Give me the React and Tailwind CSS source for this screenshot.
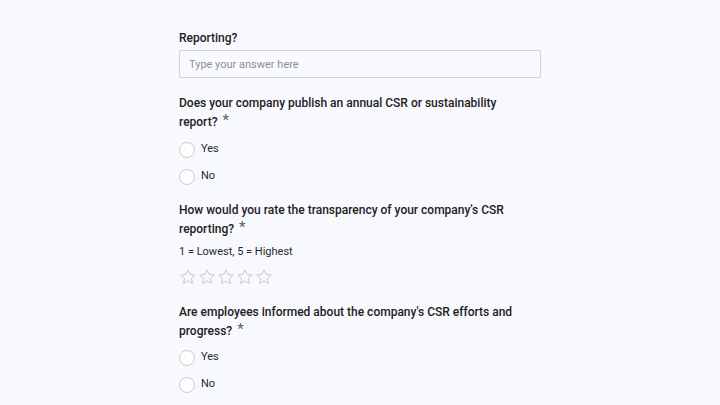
const Star = () => (
  <svg width="18" height="18" viewBox="0 0 24 24" fill="none" stroke="#c4c6ca" strokeWidth="1.3" strokeLinejoin="round">
    <path d="M12 2.5l2.9 6.1 6.6.8-4.9 4.6 1.3 6.6L12 17.3l-5.9 3.3 1.3-6.6-4.9-4.6 6.6-.8z" />
  </svg>
)

const Question = ({ children, required, className = '' }) => (
  <p className={`max-w-[340px] text-[12px] leading-[19px] font-medium text-[#1d2025] ${className}`}>
    {children}
    {required && (
      <span className="inline-block ml-[5px] h-[13px] text-[15px] leading-[15px] text-[#5b5f66] font-normal align-top">*</span>
    )}
  </p>
)

const Radio = ({ label }) => (
  <label className="flex items-center h-[27px] gap-[6px] text-[11px] text-[#26292e]">
    <span className="w-4 h-4 rounded-full border border-[#c9cbd0] bg-white" />
    <span>{label}</span>
  </label>
)

const App = () => {
  return (
    <div className="min-h-screen bg-[#f8f9fc] font-['Roboto',sans-serif]">
      <div className="w-[362px] mx-auto pt-[29px]">
        <Question>Reporting?</Question>
        <input
          type="text"
          placeholder="Type your answer here"
          className="mt-[2px] block w-full h-[28px] px-[9px] text-[11px] border border-[#cfd2d8] rounded-[2px] bg-[#f9fafd] placeholder:text-[#8c9097] outline-none"
        />

        <Question required className="mt-[16px]">
          Does your company publish an annual CSR or sustainability report?
        </Question>
        <div className="mt-[4px]">
          <Radio label="Yes" />
          <Radio label="No" />
        </div>

        <Question required className="mt-[11px]">
          How would you rate the transparency of your company's CSR reporting?
        </Question>
        <p className="mt-[4px] text-[11px] leading-[17px] text-[#26292e]">1 = Lowest, 5 = Highest</p>
        <div className="mt-[8px] flex gap-[1px]">
          {[1, 2, 3, 4, 5].map(i => <Star key={i} />)}
        </div>

        <Question required className="mt-[17px]">
          Are employees informed about the company's CSR efforts and progress?
        </Question>
        <div className="mt-[3px]">
          <Radio label="Yes" />
          <Radio label="No" />
        </div>
      </div>
    </div>
  )
}

export default App
